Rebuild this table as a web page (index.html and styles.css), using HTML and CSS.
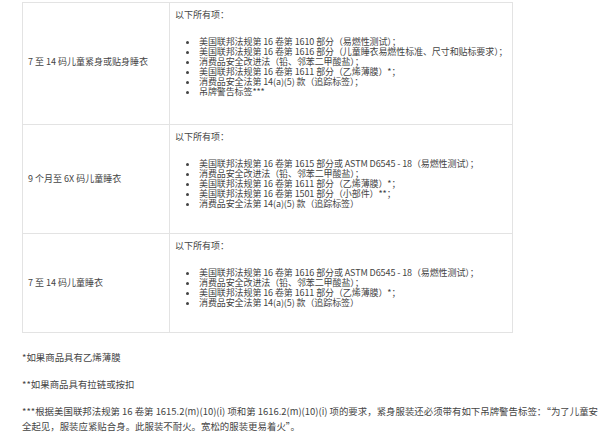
FILE: index.html
```html
<!DOCTYPE html>
<html lang="zh-CN">
<head>
<meta charset="utf-8">
<title>儿童睡衣合规要求</title>
<link rel="stylesheet" href="styles.css">
</head>
<body>
<main class="page">
  <table class="req-table">
    <tr>
      <td class="cat">7 至 14 码儿童紧身或贴身睡衣</td>
      <td class="items">
        <p class="lead">以下所有项：</p>
        <ul>
          <li>美国联邦法规第 16 卷第 1610 部分（易燃性测试）；</li>
          <li>美国联邦法规第 16 卷第 1616 部分（儿童睡衣易燃性标准、尺寸和贴标要求）；</li>
          <li>消费品安全改进法（铅、邻苯二甲酸盐）；</li>
          <li>美国联邦法规第 16 卷第 1611 部分（乙烯薄膜）*；</li>
          <li>消费品安全法第 14(a)(5) 款（追踪标签）；</li>
          <li>吊牌警告标签***</li>
        </ul>
      </td>
    </tr>
    <tr>
      <td class="cat">9 个月至 6X 码儿童睡衣</td>
      <td class="items">
        <p class="lead">以下所有项：</p>
        <ul>
          <li>美国联邦法规第 16 卷第 1615 部分或 ASTM D6545 - 18（易燃性测试）；</li>
          <li>消费品安全改进法（铅、邻苯二甲酸盐）；</li>
          <li>美国联邦法规第 16 卷第 1611 部分（乙烯薄膜）*；</li>
          <li>美国联邦法规第 16 卷第 1501 部分（小部件）**；</li>
          <li>消费品安全法第 14(a)(5) 款（追踪标签）</li>
        </ul>
      </td>
    </tr>
    <tr>
      <td class="cat">7 至 14 码儿童睡衣</td>
      <td class="items">
        <p class="lead">以下所有项：</p>
        <ul>
          <li>美国联邦法规第 16 卷第 1616 部分或 ASTM D6545 - 18（易燃性测试）；</li>
          <li>消费品安全改进法（铅、邻苯二甲酸盐）；</li>
          <li>美国联邦法规第 16 卷第 1611 部分（乙烯薄膜）*；</li>
          <li>消费品安全法第 14(a)(5) 款（追踪标签）</li>
        </ul>
      </td>
    </tr>
  </table>
  <div class="notes">
    <p>*如果商品具有乙烯薄膜</p>
    <p>**如果商品具有拉链或按扣</p>
    <p>***根据美国联邦法规第 16 卷第 1615.2(m)(10)(i) 项和第 1616.2(m)(10)(i) 项的要求，紧身服装还必须带有如下吊牌警告标签：“为了儿童安全起见，服装应紧贴合身。此服装不耐火。宽松的服装更易着火”。</p>
  </div>
</main>
</body>
</html>
```

FILE: styles.css
```css
html, body {
  margin: 0;
  padding: 0;
  background: #ffffff;
}

body {
  font-family: "Noto Sans CJK SC", "Noto Sans", sans-serif;
  font-size: 9px;
  color: #444444;
}

.page {
  padding: 2px 8px 0 22px;
}

.req-table {
  border-collapse: collapse;
  width: 491px;
}

.req-table td {
  border: 1px solid #e3e3e3;
  padding: 7px 3px 7px 5px;
  line-height: 10px;
}

.req-table tr:first-child td {
  padding-bottom: 10px;
}

.cat {
  width: 138px;
  vertical-align: middle;
}

.items {
  vertical-align: top;
}

.lead {
  margin: 0;
}

.items ul {
  margin: 17px 0;
  padding-left: 24px;
}

.items li {
  white-space: nowrap;
  letter-spacing: -0.1px;
}

.notes {
  margin-top: 17px;
  font-size: 9.43px;
}

.notes p {
  margin: 0 0 12px;
  line-height: 15px;
}
```
